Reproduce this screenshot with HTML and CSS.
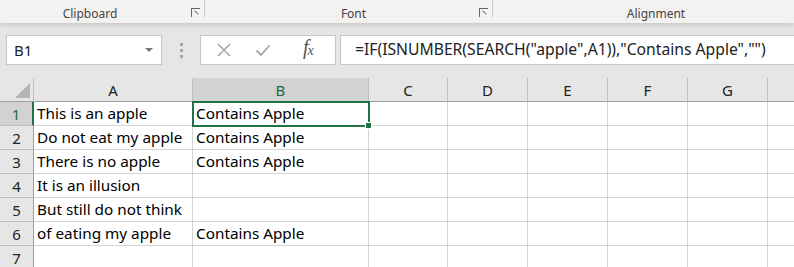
FILE: index.html
```html
<!DOCTYPE html>
<html>
<head>
    <title>Contains Apple</title>
    <link rel="stylesheet" href="styles.css">
</head>
<body>
    <!-- Ribbon group labels -->
    <div class="ribbon">
        <div class="group group-clipboard">
            <span class="group-label">Clipboard</span>
            <span class="launcher"></span>
        </div>
        <div class="group group-font">
            <span class="group-label">Font</span>
            <span class="launcher"></span>
        </div>
        <div class="group group-align">
            <span class="group-label">Alignment</span>
        </div>
    </div>

    <!-- Formula bar -->
    <div class="formula-bar">
        <div class="name-box">
            <span>B1</span>
            <span class="arrow"></span>
        </div>
        <div class="grip"><i></i><i></i><i></i></div>
        <div class="fx-buttons">
            <svg class="fx-icon" width="16" height="16" viewBox="0 0 16 16">
                <path d="M2 2 L14 14 M14 2 L2 14" stroke="#a6a6a6" stroke-width="1.6" fill="none"/>
            </svg>
            <svg class="fx-icon" width="16" height="16" viewBox="0 0 16 16">
                <path d="M1.5 8.5 L6 13 L14.5 3.5" stroke="#a6a6a6" stroke-width="1.8" fill="none"/>
            </svg>
            <span class="fx">f<sub>x</sub></span>
        </div>
        <div class="formula-input">=IF(ISNUMBER(SEARCH("apple",A1)),"Contains Apple","")</div>
    </div>

    <!-- Sheet -->
    <div class="sheet">
        <div class="grid">
            <div class="hd corner"><span class="tri"></span></div>
            <div class="hd col">A</div>
            <div class="hd col sel">B</div>
            <div class="hd col">C</div>
            <div class="hd col">D</div>
            <div class="hd col">E</div>
            <div class="hd col">F</div>
            <div class="hd col">G</div>
            <div class="hd col last"></div>

            <div class="hd row sel">1</div>
            <div class="cell">This is an apple</div>
            <div class="cell active">Contains Apple<span class="handle"></span></div>
            <div class="cell"></div><div class="cell"></div><div class="cell"></div><div class="cell"></div><div class="cell"></div><div class="cell last"></div>

            <div class="hd row">2</div>
            <div class="cell">Do not eat my apple</div>
            <div class="cell">Contains Apple</div>
            <div class="cell"></div><div class="cell"></div><div class="cell"></div><div class="cell"></div><div class="cell"></div><div class="cell last"></div>

            <div class="hd row">3</div>
            <div class="cell">There is no apple</div>
            <div class="cell">Contains Apple</div>
            <div class="cell"></div><div class="cell"></div><div class="cell"></div><div class="cell"></div><div class="cell"></div><div class="cell last"></div>

            <div class="hd row">4</div>
            <div class="cell">It is an illusion</div>
            <div class="cell"></div>
            <div class="cell"></div><div class="cell"></div><div class="cell"></div><div class="cell"></div><div class="cell"></div><div class="cell last"></div>

            <div class="hd row">5</div>
            <div class="cell">But still do not think</div>
            <div class="cell"></div>
            <div class="cell"></div><div class="cell"></div><div class="cell"></div><div class="cell"></div><div class="cell"></div><div class="cell last"></div>

            <div class="hd row">6</div>
            <div class="cell">of eating my apple</div>
            <div class="cell">Contains Apple</div>
            <div class="cell"></div><div class="cell"></div><div class="cell"></div><div class="cell"></div><div class="cell"></div><div class="cell last"></div>

            <div class="hd row">7</div>
            <div class="cell"></div>
            <div class="cell"></div>
            <div class="cell"></div><div class="cell"></div><div class="cell"></div><div class="cell"></div><div class="cell"></div><div class="cell last"></div>
        </div>
    </div>
</body>
</html>
```

FILE: styles.css
```css
body, html {
    margin: 0;
    padding: 0;
    width: 794px;
    height: 267px;
    overflow: hidden;
    background: #e6e6e6;
    font-family: 'Noto Sans', 'Open Sans', sans-serif;
}

/* ribbon strip at the top */
.ribbon {
    height: 23px;
    display: flex;
    background: #f3f2f1;
    box-shadow: 0 2px 5px rgba(0, 0, 0, 0.14);
    position: relative;
}

.group {
    position: relative;
    display: flex;
    justify-content: center;
    align-items: flex-end;
    height: 17px;
}

.group-clipboard {
    width: 204px;
    border-right: 1px solid #c8c8c8;
}

.group-font {
    width: 287px;
    border-right: 1px solid #c8c8c8;
}

.group-align {
    width: 300px;
}

.group-label {
    font-size: 12px;
    color: #444;
    line-height: 14px;
    position: relative;
    top: 4px;
}

.group-clipboard .group-label {
    margin-right: 24px;
}

.group-font .group-label {
    margin-left: 10px;
}

.group-align .group-label {
    margin-left: 26px;
}

/* small dialog launcher glyph */
.launcher {
    position: absolute;
    right: 4px;
    bottom: 0;
    width: 8px;
    height: 8px;
    border-left: 1px solid #666;
    border-top: 1px solid #666;
}

.launcher:after {
    content: "";
    position: absolute;
    left: 2px;
    top: 3px;
    width: 5px;
    height: 1px;
    background: #666;
    transform: rotate(45deg);
}

/* name box + formula */
.formula-bar {
    display: flex;
    align-items: center;
    padding: 12px 0 0 6px;
    height: 30px;
}

.name-box {
    background: #fff;
    border: 1px solid #c6c6c6;
    display: flex;
    align-items: center;
    justify-content: space-between;
    padding: 0 8px 0 7px;
    box-sizing: border-box;
    width: 156px;
    height: 30px;
    font-size: 15px;
    color: #222;
}

.arrow {
    width: 0;
    height: 0;
    border-left: 4px solid transparent;
    border-right: 4px solid transparent;
    border-top: 4px solid #777;
}

.grip {
    width: 38px;
    display: flex;
    flex-direction: column;
    align-items: center;
    gap: 3px;
}

.grip i {
    width: 3px;
    height: 3px;
    background: #a6a6a6;
}

.fx-buttons {
    width: 136px;
    height: 30px;
    box-sizing: border-box;
    background: #fff;
    border: 1px solid #c6c6c6;
    display: flex;
    align-items: center;
    padding-left: 15px;
    gap: 23px;
}

.fx {
    font-family: 'Liberation Serif', serif;
    font-style: italic;
    font-size: 20px;
    line-height: 20px;
    color: #555;
    margin-left: 9px;
    position: relative;
    top: -1px;
}

.fx sub {
    font-size: 14px;
    vertical-align: -1px;
    margin-left: -1px;
}

.formula-input {
    flex: 1;
    margin-left: 4px;
    height: 30px;
    box-sizing: border-box;
    background: #fff;
    border: 1px solid #c6c6c6;
    border-right: none;
    padding-left: 14px;
    font-size: 15.7px;
    line-height: 27px;
    color: #222;
    white-space: nowrap;
}

/* sheet grid */
.sheet {
    padding-top: 13px;
}

.grid {
    display: grid;
    grid-template-columns: 34px 159px 176px 79px 80px 80px 80px 80px 27px;
    grid-auto-rows: 24px;
    background: #fff;
}

.hd {
    background: #e6e6e6;
    color: #222;
    font-size: 15px;
    display: flex;
    align-items: center;
    justify-content: center;
    box-sizing: border-box;
}

.hd.col {
    border-right: 1px solid #c0c0c0;
    border-bottom: 1px solid #9f9f9f;
}

.hd.row {
    border-right: 1px solid #9f9f9f;
    border-bottom: 1px solid #c0c0c0;
}

.hd.sel {
    background: #d2d2d2;
    color: #1d6b40;
}

.hd.row.sel {
    border-right: 2px solid #217346;
}

.corner {
    border-right: 1px solid #c0c0c0;
    border-bottom: 1px solid #9f9f9f;
    position: relative;
}

.tri {
    position: absolute;
    right: 3px;
    bottom: 3px;
    width: 0;
    height: 0;
    border-left: 15px solid transparent;
    border-bottom: 15px solid #b4b4b4;
}

.cell {
    border-right: 1px solid #d4d4d4;
    border-bottom: 1px solid #d4d4d4;
    box-sizing: border-box;
    font-size: 15.3px;
    color: #000;
    padding-left: 3px;
    line-height: 23px;
    white-space: nowrap;
    overflow: hidden;
}

.last {
    border-right: none;
}

/* selected cell B1 */
.cell.active {
    position: relative;
    overflow: visible;
    outline: 2px solid #217346;
    outline-offset: -1px;
    z-index: 2;
}

.handle {
    position: absolute;
    right: -4px;
    bottom: -4px;
    width: 5px;
    height: 5px;
    background: #217346;
    border: 1px solid #fff;
}
```
